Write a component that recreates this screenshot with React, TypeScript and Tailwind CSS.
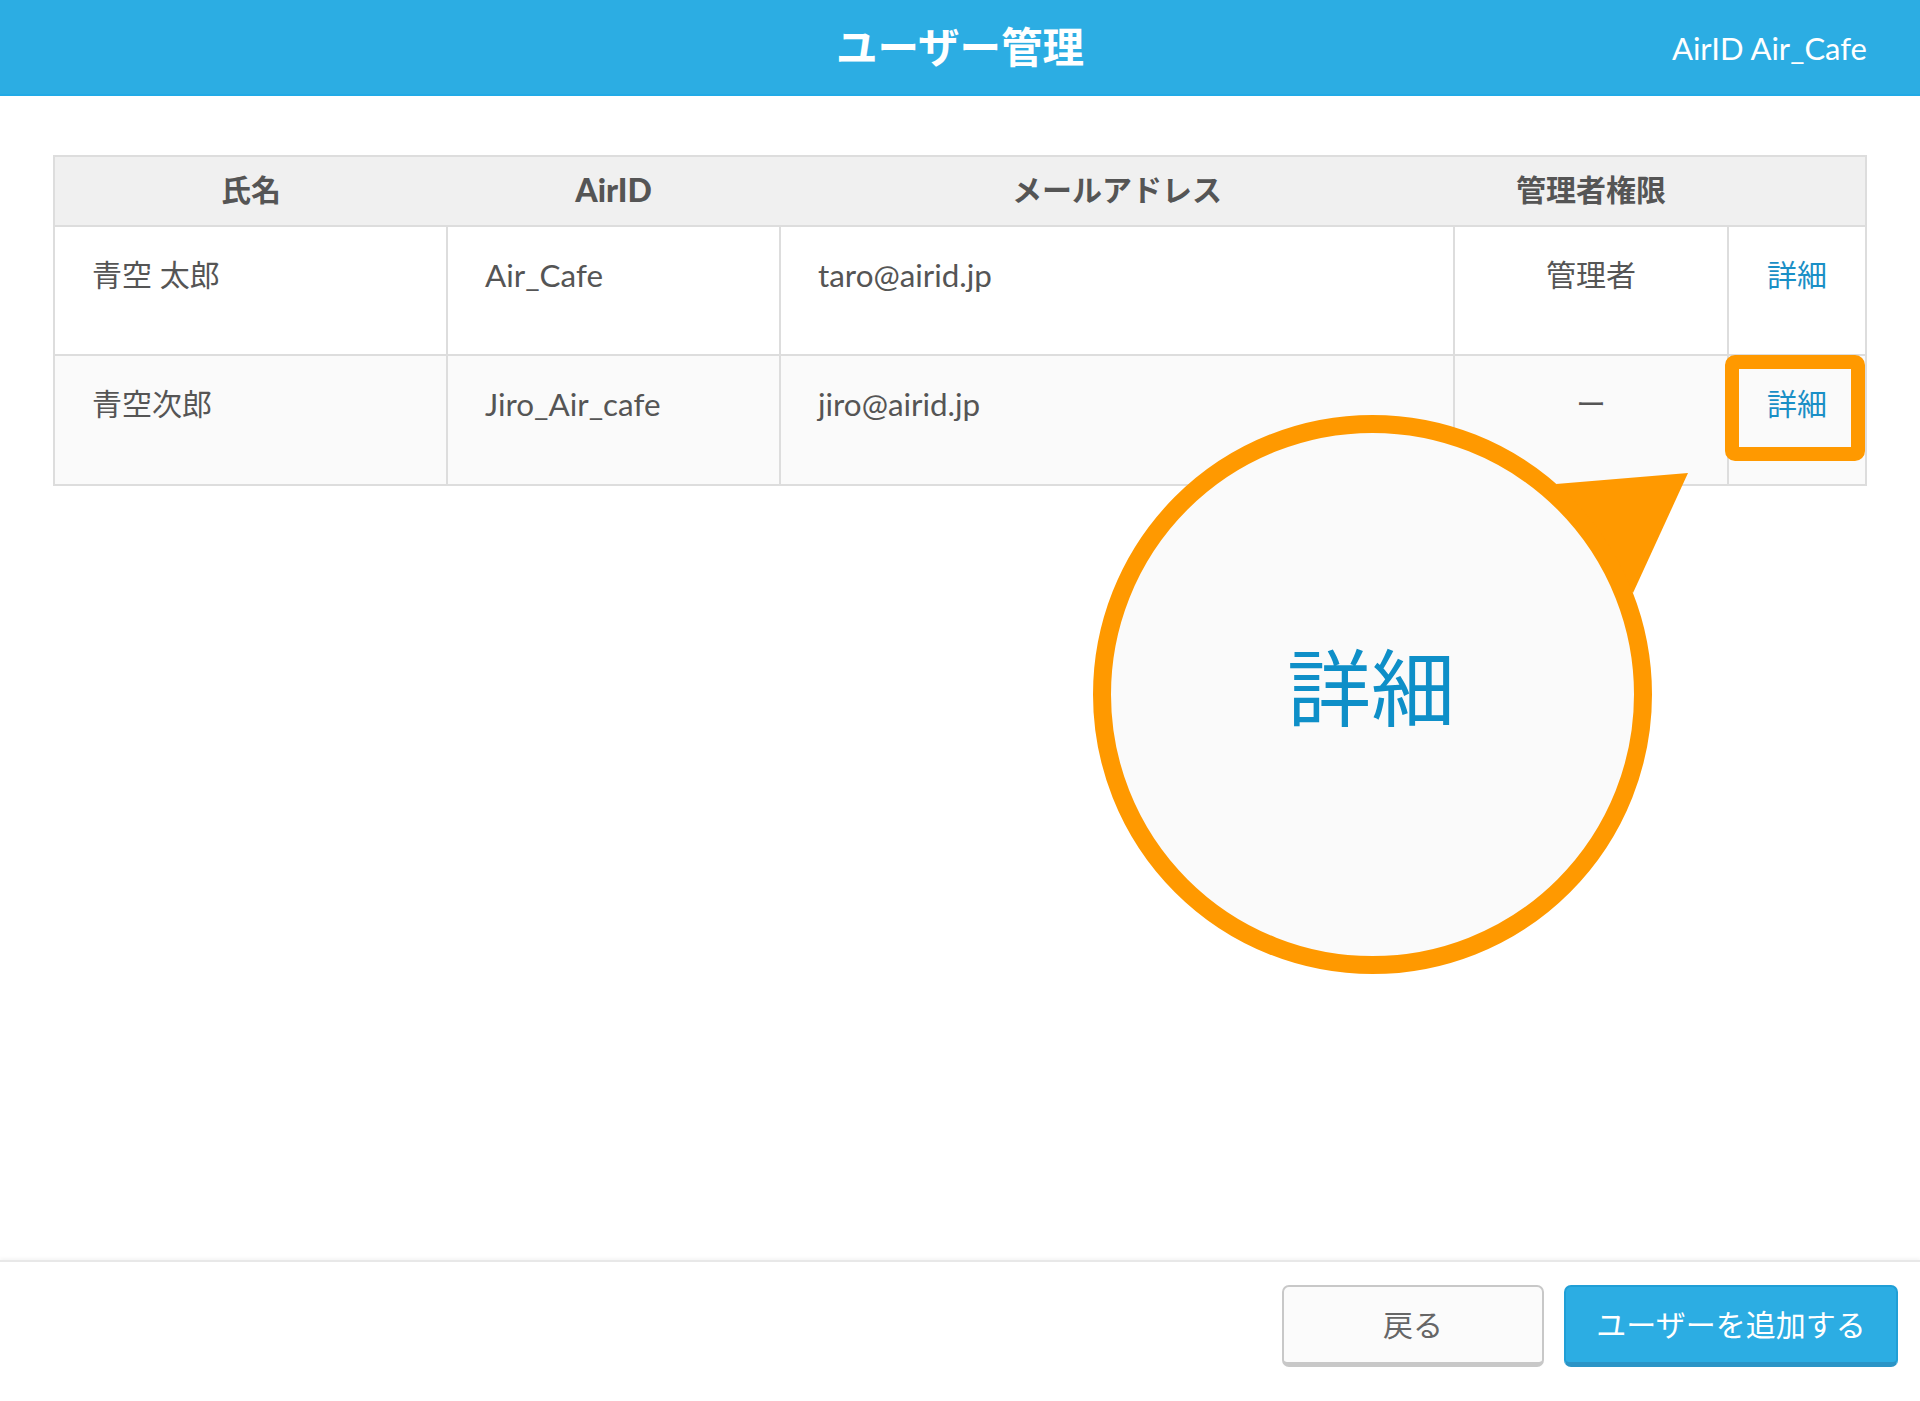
const font = "font-['Lato','Noto_Sans_CJK_JP',sans-serif]";

const rows = [
  { name: '青空 太郎', id: 'Air_Cafe', mail: 'taro@airid.jp', role: '管理者', bg: 'bg-white', h: 'h-[129px]' },
  { name: '青空次郎', id: 'Jiro_Air_cafe', mail: 'jiro@airid.jp', role: 'ー', bg: 'bg-[#fafafa]', h: 'h-[130px]' },
];

export default function App() {
  return (
    <div className={`${font} flex h-[1401px] w-[1920px] flex-col bg-white text-[#555]`}>
      {/* Header */}
      <header className="relative flex h-[96px] shrink-0 items-center justify-center border-b-2 border-[#22aae6] bg-[#2cade3] text-white">
        <h1 className="pt-[1px] text-[41.5px] leading-none font-bold">ユーザー管理</h1>
        <div className="absolute right-[53px] pt-[2px] text-[31px] leading-none">AirID Air_Cafe</div>
      </header>

      {/* Table */}
      <main className="relative flex-1 px-[53px] pt-[59px]">
        <table className="w-full table-fixed border-collapse text-[30px] leading-none">
          <colgroup>
            <col className="w-[393px]" />
            <col className="w-[333px]" />
            <col className="w-[674px]" />
            <col className="w-[274px]" />
            <col />
          </colgroup>
          <thead>
            <tr className="h-[70px] border-2 border-[#ddd] bg-[#f0f0f0]">
              <th className="pb-[4px] text-center font-bold">氏名</th>
              <th className="pb-[2px] text-center text-[32px] font-black">AirID</th>
              <th className="pb-[4px] text-center font-bold">メールアドレス</th>
              <th className="pb-[4px] text-center font-bold">管理者権限</th>
              <th />
            </tr>
          </thead>
          <tbody>
            {rows.map((r) => (
              <tr key={r.mail} className={`${r.h} ${r.bg}`}>
                <td className="border-2 border-[#ddd] pt-[32px] pl-[37px] align-top">{r.name}</td>
                <td className="border-2 border-[#ddd] pt-[33px] pl-[37px] align-top text-[31.4px]">{r.id}</td>
                <td className="border-2 border-[#ddd] pt-[33px] pl-[37px] align-top text-[31.4px]">{r.mail}</td>
                <td className="border-2 border-[#ddd] pt-[32px] text-center align-top">{r.role}</td>
                <td className="border-2 border-[#ddd] pt-[32px] text-center align-top text-[#1a8fc6]">詳細</td>
              </tr>
            ))}
          </tbody>
        </table>

        {/* Highlight around the second row's link */}
        <div className="absolute top-[259px] left-[1725px] h-[106px] w-[140px] rounded-[10px] border-[14px] border-[#ff9900]" />

        {/* Callout pointer */}
        <svg className="absolute top-[360px] left-[1530px] h-[140px] w-[170px]" viewBox="0 0 170 140">
          <path d="M26 28 L158 17 L103 137 Z" fill="#ff9900" />
        </svg>

        {/* Magnifier circle */}
        <div className="absolute top-[319px] left-[1093px] flex h-[559px] w-[559px] items-center justify-center rounded-full border-[18px] border-[#ff9900] bg-[#fafafa] pr-[3px] pb-[14px] text-[84px] leading-none text-[#0e8fc8]">
          詳細
        </div>
      </main>

      {/* Footer */}
      <footer className="flex h-[141px] shrink-0 items-start justify-end gap-[20px] border-t-2 border-[#e8e8e8] pt-[23px] pr-[22px] text-[30px] shadow-[0_-2px_3px_rgba(0,0,0,0.04)]">
        <button className="h-[82px] w-[262px] rounded-[7px] border-2 border-b-[5px] border-[#c8c8c8] bg-[#fbfbfb] text-[#666]">
          戻る
        </button>
        <button className="h-[82px] w-[334px] rounded-[7px] border-2 border-t-[#209fd6] border-r-[#209fd6] border-b-[5px] border-b-[#2b94c6] border-l-[#209fd6] bg-[#2cade3] text-white">
          ユーザーを追加する
        </button>
      </footer>
    </div>
  );
}
